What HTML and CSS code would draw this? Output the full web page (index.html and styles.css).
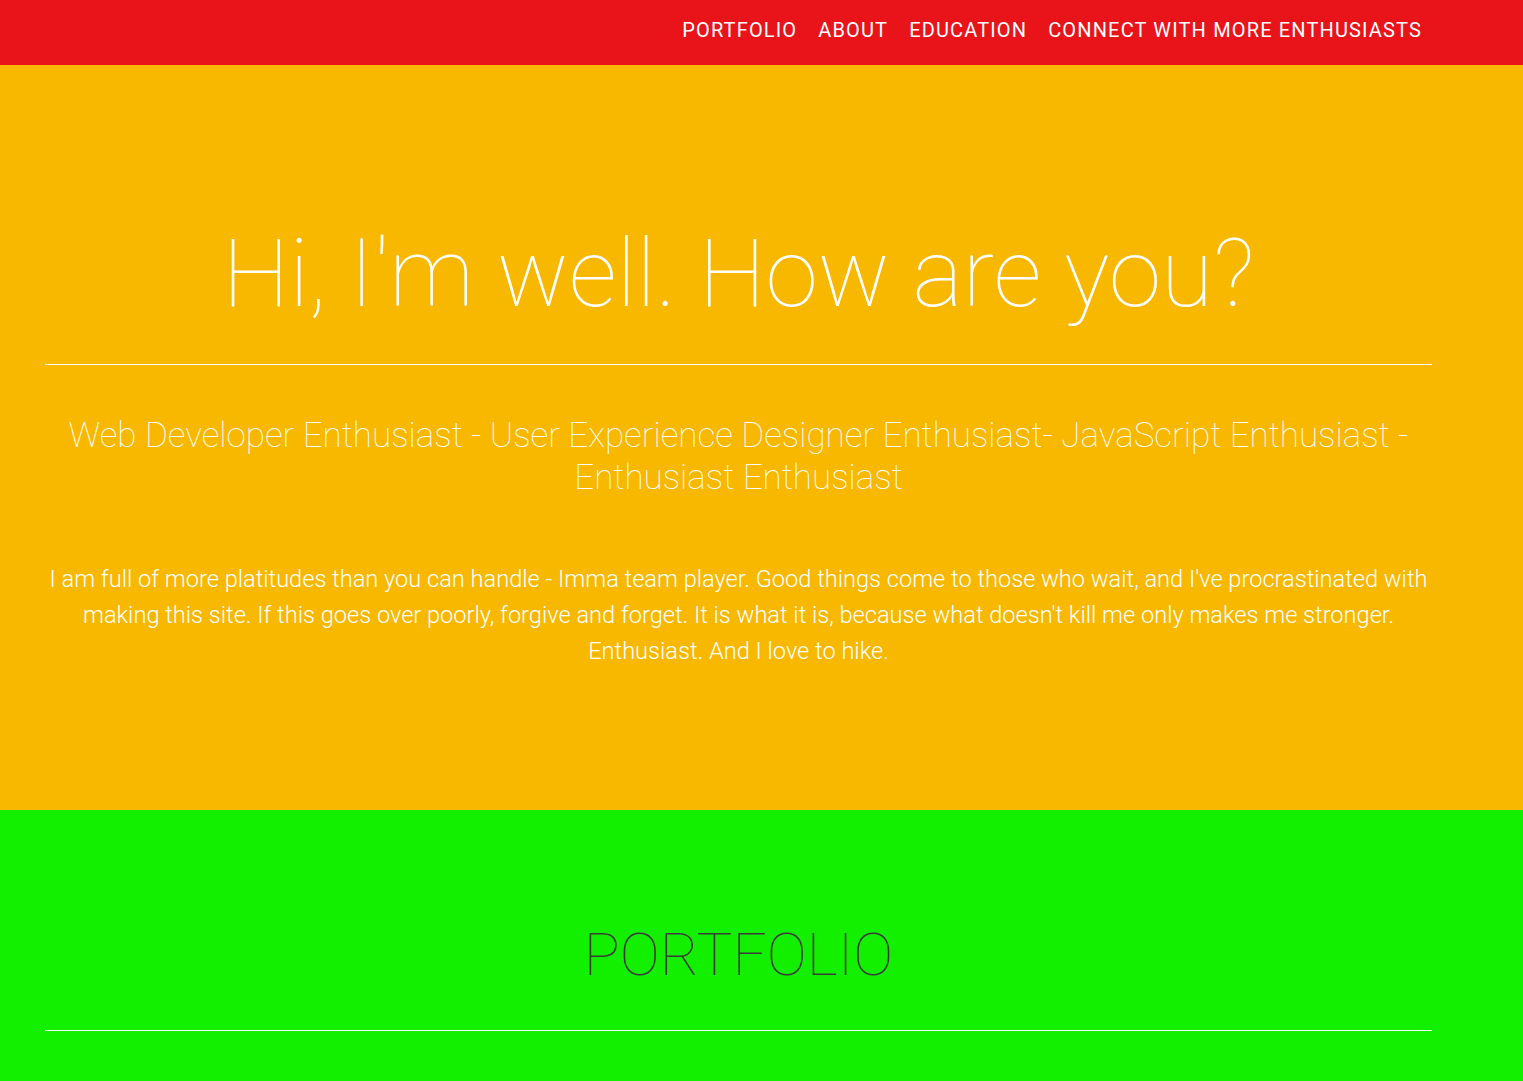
FILE: index.html
```html
<!DOCTYPE html>
<html lang="en">
<head>
<meta charset="utf-8">
<title>Enthusiast</title>
<link rel="stylesheet" href="styles.css">
</head>
<body>
<nav class="navbar">
  <ul class="nav-links">
    <li><a href="#portfolio">Portfolio</a></li>
    <li><a href="#about">About</a></li>
    <li><a href="#education">Education</a></li>
    <li><a href="#connect">Connect with more Enthusiasts</a></li>
  </ul>
</nav>
<header class="hero">
  <div class="container">
    <h1 class="hero-title">Hi, I'm well. How are you?</h1>
    <hr class="rule">
    <h2 class="hero-sub">Web Developer Enthusiast - User Experience Designer Enthusiast- JavaScript Enthusiast - Enthusiast Enthusiast</h2>
    <p class="hero-text">I am full of more platitudes than you can handle - Imma team player. Good things come to those who wait, and I've procrastinated with making this site. If this goes over poorly, forgive and forget. It is what it is, because what doesn't kill me only makes me stronger. Enthusiast. And I love to hike.</p>
  </div>
</header>
<section class="portfolio" id="portfolio">
  <div class="container">
    <h2 class="section-title">PORTFOLIO</h2>
    <hr class="rule">
  </div>
</section>
</body>
</html>
```

FILE: styles.css
```css
html, body {
  margin: 0;
  padding: 0;
}
body {
  font-family: Roboto, "Liberation Sans", sans-serif;
  color: #fff;
  background: #12f000;
}
.navbar {
  background: #e8141a;
  height: 65px;
  display: flex;
  justify-content: flex-end;
  align-items: center;
  padding-right: 101px;
}
.nav-links {
  list-style: none;
  margin: 0;
  padding: 0 0 5px;
  display: flex;
  gap: 21px;
}
.nav-links a {
  color: #fff;
  text-decoration: none;
  text-transform: uppercase;
  font-size: 20px;
  font-weight: 400;
  letter-spacing: 1.15px;
}
.container {
  margin: 0 91px 0 45px;
  text-align: center;
}
.hero {
  background: #f8b800;
  padding: 157px 0 141px;
}
.hero-title {
  margin: 0;
  font-size: 95px;
  line-height: 104px;
  font-weight: 100;
}
.rule {
  margin: 38px 0 0;
  border: 0;
  border-top: 1px solid #fff;
  height: 0;
}
.hero-sub {
  margin: 50px 0 0;
  font-size: 35px;
  line-height: 42px;
  font-weight: 100;
}
.hero-text {
  margin: 62px 0 0;
  font-size: 23.6px;
  line-height: 36px;
  font-weight: 300;
}
.portfolio {
  padding: 112px 0 60px;
}
.section-title {
  margin: 0;
  font-size: 60px;
  line-height: 66px;
  font-weight: 100;
  color: #3a3a3a;
}
.portfolio .rule {
  margin-top: 42px;
}
```
